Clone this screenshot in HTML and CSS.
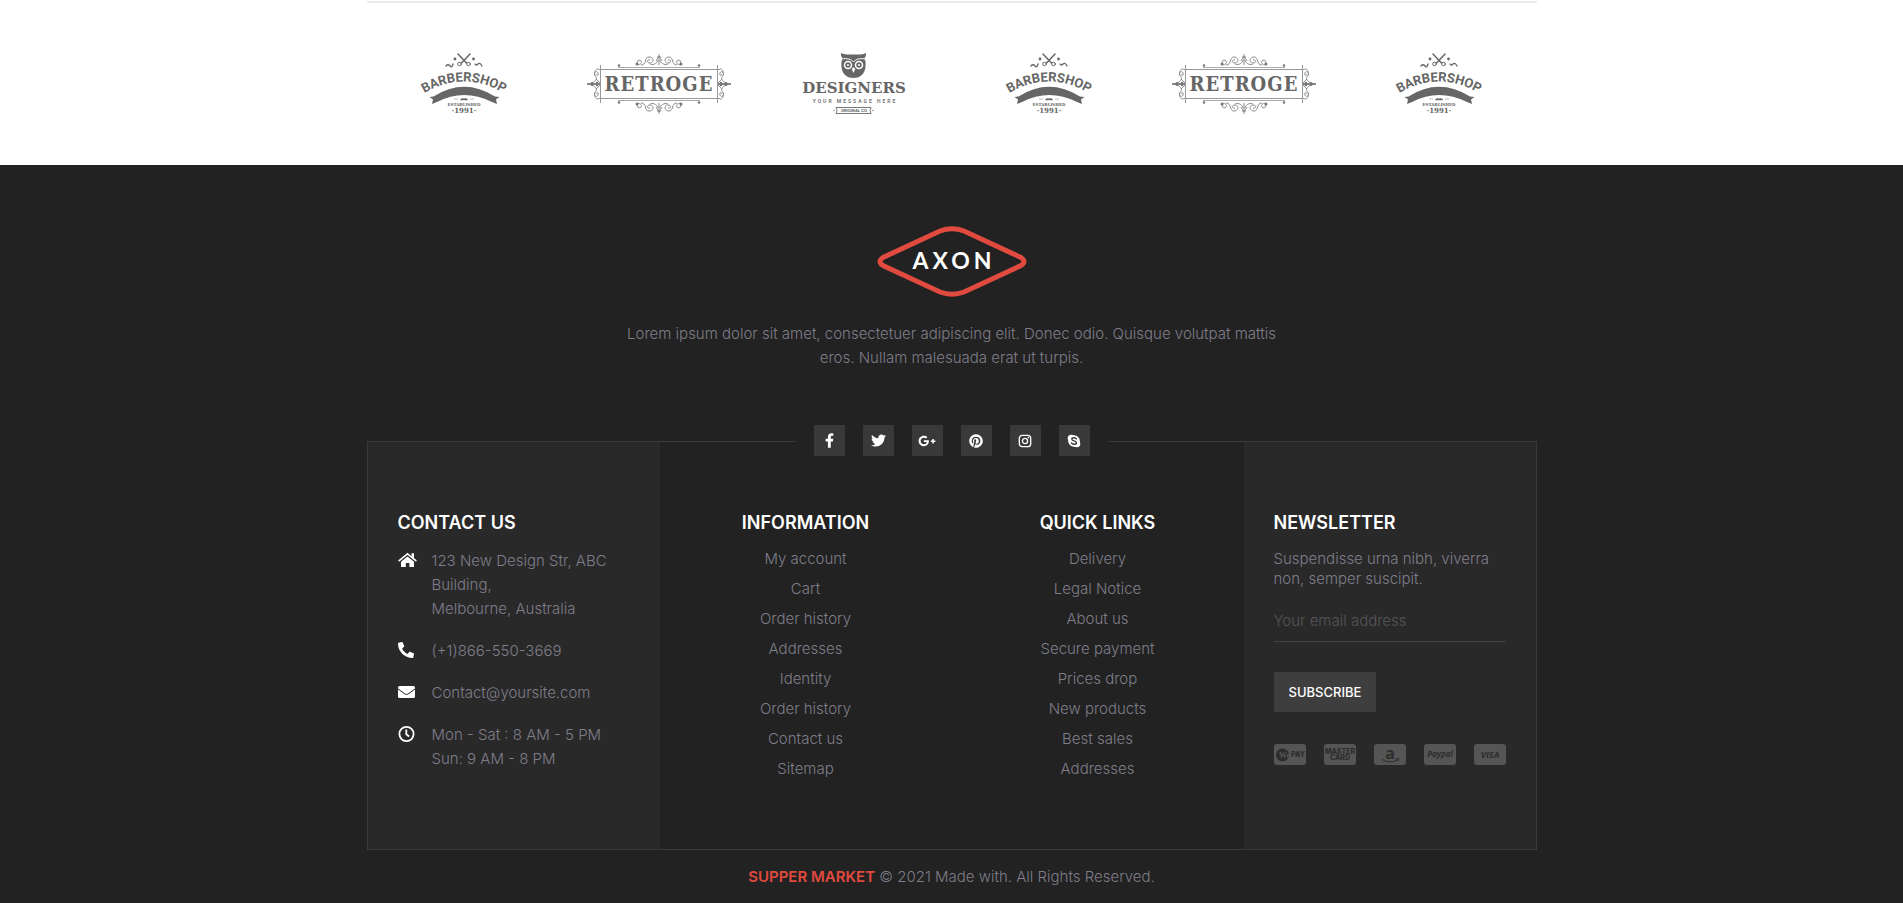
FILE: index.html
```html
<!DOCTYPE html>
<html lang="en">
<head>
<meta charset="utf-8">
<title>Axon</title>
<link rel="stylesheet" href="styles.css">
</head>
<body>
<svg class="symbols" aria-hidden="true">
  <symbol id="barbershop" viewBox="19 10 90 68">
    <g fill="none" stroke="#666" stroke-linecap="round">
      <path stroke-width="1.5" d="M58 14l8.500 9M70 14l-8.500 9"/>
      <circle cx="59.500" cy="24" r="1.8"/><circle cx="68.500" cy="24" r="1.8"/>
      <path stroke-width="1.3" d="M46 26q2-2.500 4 0t3-2M75 24q1 2 3 0t4 2"/>
    </g>
    <circle cx="55" cy="19" r="1.400" fill="#666"/><circle cx="73.500" cy="19" r="1.400" fill="#666"/>
    <path id="barber-arc" fill="none" d="M21 55Q64 28 107 55"/>
    <text class="barber-name"><textPath href="#barber-arc" startOffset="50%" text-anchor="middle">BARBERSHOP</textPath></text>
    <path fill="#666" d="M29.500 57l4-.5Q64 37 95 56.500l4.500.5-3.500 2.500 1 4.500-5-2Q64 48 37 62l-5 2 1-4.500z"/>
    <path stroke="#bbb" d="M54 59h4M70 59h4"/>
    <path fill="#666" d="M60 60q1-2.500 4-1.500 3.500-1 4 1.500-2 .5-4 0-2 .5-4 0z"/>
    <text class="barber-small" x="64" y="65.500">ESTABLISHED</text>
    <text class="barber-year" x="64" y="73">·1991·</text>
  </symbol>
  <symbol id="retroge-corner" viewBox="0 0 73 32">
    <g fill="none" stroke="#8a8a8a">
      <path d="M32 14.500h41" stroke="#aaa"/>
      <path d="M14.500 12v20M12 16.500h61" stroke="#999"/>
      <path d="M73 1v11M71 4h4M70 8q3-5 3-5M50 11c3 2 7-1 5-3s-5 0-3 2M55 12c6 0 3-8 8-8s5 6 1 6-3-4 0-3M64 11c4 2 8-2 8-4"/>
      <path d="M1 30.500h13M6 30c4-2 6-5 3-7M9 23c-2-4 2-6 3-3s-2 3-2 1M10 26c3 3 4 3 4 6M9 20c-1-2 2-5 3-4"/>
    </g>
    <circle cx="33" cy="12.500" r="1.300" fill="#777"/><circle cx="51" cy="11" r="1.500" fill="#777"/>
    <circle cx="6" cy="30.500" r="1.600" fill="#777"/><circle cx="11" cy="30" r="1.300" fill="#777"/>
  </symbol>
  <symbol id="retroge" viewBox="16 10 148 68">
    <g id="retroge-top">
      <use href="#retroge-corner" x="17" y="13" width="73" height="32"/>
      <use href="#retroge-corner" x="17" y="13" width="73" height="32" transform="matrix(-1 0 0 1 180 0)"/>
    </g>
    <use href="#retroge-top" transform="matrix(1 0 0 -1 0 88)"/>
    <text class="retroge-name" x="90" y="51">RETROGE</text>
  </symbol>
  <symbol id="designers" viewBox="15 10 120 68">
    <path fill="#666" d="M62 13c4 2 8 1.500 12.500 1.500S84 15 87 13c0 2 0 3.500-1.500 5C88 25 87 38 74.500 38S61 25 63.500 18C62 16.500 62 15 62 13z"/>
    <path fill="none" stroke="#fff" d="M63 19c5-1 9 0 11.500 3 2.500-3 6.500-4 11.500-3"/>
    <circle cx="69" cy="25" r="3.500" fill="#666" stroke="#fff" stroke-width="1.500"/><circle cx="80" cy="25" r="3.500" fill="#666" stroke="#fff" stroke-width="1.500"/>
    <circle cx="69" cy="25" r="1" fill="#fff"/><circle cx="80" cy="25" r="1" fill="#fff"/>
    <path fill="#fff" d="M74.500 27l1.800 2-1.800 4-1.800-4z"/>
    <text class="designers-name" x="75" y="53">DESIGNERS</text>
    <text class="designers-line" x="76" y="63">YOUR MESSAGE HERE</text>
    <path fill="none" stroke="#777" d="M57 67.500h35l-1 3 1 3H57l1-3z"/>
    <circle cx="55" cy="70.500" r=".7" fill="#777"/><circle cx="94" cy="70.500" r=".7" fill="#777"/>
    <text class="designers-small" x="75" y="72">ORIGINAL CO</text>
  </symbol>
</svg>

<section class="container brands" aria-label="Brands">
  <svg class="brand" width="90" height="68"><use href="#barbershop"/></svg>
  <svg class="brand" width="148" height="68"><use href="#retroge"/></svg>
  <svg class="brand" width="120" height="68"><use href="#designers"/></svg>
  <svg class="brand" width="90" height="68"><use href="#barbershop"/></svg>
  <svg class="brand" width="148" height="68"><use href="#retroge"/></svg>
  <svg class="brand" width="90" height="68"><use href="#barbershop"/></svg>
</section>

<footer class="footer">
  <div class="container">
    <a class="logo" href="#" aria-label="Axon">
      <svg width="150" height="71" viewBox="0 0 150 71">
        <path fill="none" stroke="#e04a3f" stroke-width="5" d="M63 5Q75 .5 87 5L144 31.500Q150 35.500 144 39.500L87 66Q75 70.500 63 66L6 39.500Q0 35.500 6 31.500Z"/>
        <text class="logo-name" x="77" y="43">AXON</text>
      </svg>
    </a>
    <p class="intro">Lorem ipsum dolor sit amet, consectetuer adipiscing elit. Donec odio. Quisque volutpat mattis eros. Nullam malesuada erat ut turpis.</p>

    <nav class="social" aria-label="Social">
      <a href="#" aria-label="Facebook"><svg width="9" height="15" viewBox="0 0 320 512"><path d="M279.140 288l14.220-92.660h-88.910v-60.130c0-25.350 12.420-50.060 52.240-50.060h40.420V6.260S260.430 0 225.360 0c-73.220 0-121.080 44.380-121.080 124.720v70.620H22.890V288h81.390v224h100.170V288z"/></svg></a>
      <a href="#" aria-label="Twitter"><svg width="15" height="15" viewBox="0 0 512 512"><path d="M459.370 151.716c.325 4.548.325 9.097.325 13.645 0 138.720-105.583 298.558-298.558 298.558-59.452 0-114.680-17.219-161.137-47.106 8.447.974 16.568 1.299 25.340 1.299 49.055 0 94.213-16.568 130.274-44.832-46.132-.975-84.792-31.188-98.112-72.772 6.498.974 12.995 1.624 19.818 1.624 9.421 0 18.843-1.300 27.614-3.573-48.081-9.747-84.143-51.980-84.143-102.985v-1.299c13.969 7.797 30.214 12.670 47.431 13.319-28.264-18.843-46.781-51.005-46.781-87.391 0-19.492 5.197-37.360 14.294-52.954 51.655 63.675 129.300 105.258 216.365 109.807-1.624-7.797-2.599-15.918-2.599-24.040 0-57.828 46.782-104.934 104.934-104.934 30.213 0 57.502 12.670 76.670 33.137 23.715-4.548 46.456-13.320 66.599-25.340-7.798 24.366-24.366 44.833-46.132 57.827 21.117-2.273 41.584-8.122 60.426-16.243-14.292 20.791-32.161 39.308-52.628 54.253z"/></svg></a>
      <a href="#" aria-label="Google Plus"><svg width="18" height="14" viewBox="0 0 640 512"><path d="M386.061 228.496c1.834 9.692 3.143 19.384 3.143 31.956C389.204 370.205 315.599 448 204.800 448c-106.084 0-192-85.915-192-192s85.916-192 192-192c51.864 0 95.083 18.859 128.611 50.292l-52.126 50.030c-14.145-13.621-39.028-29.599-76.485-29.599-65.484 0-118.920 54.221-118.920 121.277 0 67.056 53.436 121.277 118.920 121.277 75.961 0 104.513-54.745 108.965-82.773H204.800v-66.009h181.261zm185.406 6.437V179.200h-56.001v55.733h-55.733v56.001h55.733v55.733h56.001v-55.733H627.200v-56.001h-55.733z"/></svg></a>
      <a href="#" aria-label="Pinterest"><svg width="14" height="14" viewBox="0 0 496 512"><path d="M496 256c0 137-111 248-248 248-25.600 0-50.200-3.900-73.400-11.100 10.100-16.500 25.200-43.500 30.800-65 3-11.600 15.400-59 15.400-59 8.100 15.400 31.700 28.500 56.800 28.500 74.800 0 128.700-68.800 128.700-154.300 0-81.900-66.900-143.200-152.900-143.200-107 0-163.900 71.800-163.900 150.100 0 36.400 19.400 81.700 50.300 96.100 4.700 2.200 7.200 1.200 8.300-3.300.8-3.400 5-20.300 6.900-28.100.6-2.500.3-4.700-1.700-7.100-10.100-12.500-18.300-35.300-18.300-56.600 0-54.700 41.400-107.600 112-107.600 60.900 0 103.600 41.500 103.600 100.900 0 67.100-33.900 113.600-78 113.600-24.300 0-42.600-20.100-36.700-44.800 7-29.500 20.500-61.300 20.500-82.600 0-19-10.200-34.900-31.400-34.900-24.900 0-44.900 25.700-44.900 60.200 0 22 7.400 36.800 7.400 36.800s-24.500 103.800-29 123.200c-5 21.400-3 51.600-.9 71.200C65.400 450.900 0 361.100 0 256 0 119 111 8 248 8s248 111 248 248z"/></svg></a>
      <a href="#" aria-label="Instagram"><svg width="14" height="14" viewBox="0 0 14 14"><rect x="1.300" y="1.300" width="11.400" height="11.400" rx="3" fill="none" stroke="#fff" stroke-width="1.300"/><circle cx="7" cy="7" r="2.600" fill="none" stroke="#fff" stroke-width="1.300"/><circle cx="10.400" cy="3.600" r=".8"/></svg></a>
      <a href="#" aria-label="Skype"><svg width="14" height="14" viewBox="0 0 14 14"><circle cx="7" cy="7" r="5.800"/><circle cx="4.300" cy="4.300" r="3.600"/><circle cx="9.700" cy="9.700" r="3.600"/><path fill="none" stroke="#393939" stroke-width="1.400" stroke-linecap="round" d="M9.400 4.900C8.800 3.500 4.800 3.300 4.800 5.200S9.500 6.700 9.500 8.700 5.200 10.700 4.500 9"/></svg></a>
    </nav>

    <div class="panel">
      <section class="column column-shaded">
        <h2>Contact us</h2>
        <ul class="contact">
          <li><svg width="19" height="16" viewBox="0 0 19 16"><path d="M9.500 4.500l6.500 5.300V15h-4.600v-4H7.800v4H3V9.800z"/><path fill="none" stroke="#fff" stroke-width="1.700" stroke-linecap="round" d="M1.200 8.600L9.500 1.900l8.300 6.700"/><path d="M13.500 1.300H16v5l-2.500-2z"/></svg><span>123 New Design Str, ABC Building,<br>Melbourne, Australia</span></li>
          <li><svg width="16" height="16" viewBox="0 0 512 512"><path transform="matrix(-1 0 0 1 512 0)" d="M493.400 24.600l-104-24c-11.300-2.600-22.900 3.300-27.500 13.900l-48 112c-4.200 9.800-1.400 21.300 6.900 28l60.600 49.600c-36 76.700-98.900 140.500-177.200 177.200l-49.600-60.600c-6.800-8.300-18.200-11.100-28-6.900l-112 48C3.900 366.500-2 378.100.6 389.400l24 104C27.100 504.200 36.700 512 48 512c256.100 0 464-207.500 464-464 0-11.200-7.700-20.900-18.600-23.400z"/></svg><span>(+1)866-550-3669</span></li>
          <li><svg width="17" height="16" viewBox="0 0 17 16"><rect y="2" width="17" height="12" rx="1.500"/><path fill="none" stroke="#292929" d="M0 5l7 5q1.500 1 3 0l7-5"/></svg><span>Contact@yoursite.com</span></li>
          <li><svg width="17" height="16" viewBox="0 0 17 16"><circle cx="8.500" cy="8" r="7.100" fill="none" stroke="#fff" stroke-width="1.800"/><path fill="none" stroke="#fff" stroke-width="1.800" d="M8.300 3.500v4.800l2.800 2.200"/></svg><span>Mon - Sat : 8 AM - 5 PM<br>Sun: 9 AM - 8 PM</span></li>
        </ul>
      </section>

      <section class="column column-center">
        <h2>Information</h2>
        <ul class="links">
          <li><a href="#">My account</a></li>
          <li><a href="#">Cart</a></li>
          <li><a href="#">Order history</a></li>
          <li><a href="#">Addresses</a></li>
          <li><a href="#">Identity</a></li>
          <li><a href="#">Order history</a></li>
          <li><a href="#">Contact us</a></li>
          <li><a href="#">Sitemap</a></li>
        </ul>
      </section>

      <section class="column column-center">
        <h2>Quick links</h2>
        <ul class="links">
          <li><a href="#">Delivery</a></li>
          <li><a href="#">Legal Notice</a></li>
          <li><a href="#">About us</a></li>
          <li><a href="#">Secure payment</a></li>
          <li><a href="#">Prices drop</a></li>
          <li><a href="#">New products</a></li>
          <li><a href="#">Best sales</a></li>
          <li><a href="#">Addresses</a></li>
        </ul>
      </section>

      <section class="column column-shaded">
        <h2>Newsletter</h2>
        <form class="newsletter">
          <p>Suspendisse urna nibh, viverra non, semper suscipit.</p>
          <input type="email" placeholder="Your email address" aria-label="Your email address">
          <button type="button">SUBSCRIBE</button>
        </form>
        <div class="cards">
          <svg width="32" height="21"><rect width="32" height="21" rx="3"/><circle class="card-ink" cx="8.500" cy="11" r="6.500"/><text class="card-cut" x="5" y="14">We</text><text class="card-tiny" x="17" y="13">PAY</text></svg>
          <svg width="32" height="21"><rect width="32" height="21" rx="3"/><text class="card-tiny card-mid" x="16" y="10">MASTER</text><text class="card-tiny card-mid" x="16" y="16">CARD</text></svg>
          <svg width="32" height="21"><rect width="32" height="21" rx="3"/><text class="card-large card-mid" x="16" y="15">a</text><path class="card-smile" d="M8 15.500q8 4.500 15 .5M21.500 15l3-.5-.5 2.500"/></svg>
          <svg width="32" height="21"><rect width="32" height="21" rx="3"/><text class="card-italic card-mid" x="16" y="13">Paypal</text></svg>
          <svg width="32" height="21"><rect width="32" height="21" rx="3"/><text class="card-italic card-visa card-mid" x="16" y="14">VISA</text></svg>
        </div>
      </section>
    </div>

    <p class="copyright"><a href="#">SUPPER MARKET</a> © 2021 Made with. All Rights Reserved.</p>
  </div>
</footer>
</body>
</html>
```
FILE: styles.css
```css
* { box-sizing: border-box; }

body {
  margin: 0;
  padding-top: 1px;
  background: #fff;
  color: #7f7d89;
  font: 300 15px/24px Inter, "Liberation Sans", sans-serif;
}

h2, p, ul { margin: 0; padding: 0; }
ul { list-style: none; }
a { color: inherit; text-decoration: none; }
svg { display: block; }

.symbols { position: absolute; width: 0; height: 0; }

.container { max-width: 1170px; margin: 0 auto; }

.brands {
  display: grid;
  grid-template-columns: repeat(6, 1fr);
  justify-items: center;
  padding: 47px 0;
  border-top: 2px solid #ebebeb;
}

.barber-name { font: 700 13px Roboto, sans-serif; fill: #666; }
.barber-small { font: 700 4px "DejaVu Serif", serif; fill: #666; text-anchor: middle; }
.barber-year { font: 700 7px "DejaVu Serif", serif; fill: #666; text-anchor: middle; }
.retroge-name { font: 700 20px "DejaVu Serif Condensed", "DejaVu Serif", serif; letter-spacing: 1px; fill: #666; text-anchor: middle; }
.designers-name { font: 700 15px "DejaVu Serif", serif; fill: #666; text-anchor: middle; }
.designers-line { font: 700 5px Roboto, sans-serif; letter-spacing: 2px; fill: #777; text-anchor: middle; }
.designers-small { font: 700 4px Inter, sans-serif; fill: #666; text-anchor: middle; }

.footer { padding: 61px 0 14px; background: #222; }

.logo { display: block; width: fit-content; margin: 0 auto; }
.logo-name { font: 700 23px Lato, Inter, sans-serif; letter-spacing: 4px; fill: #fff; text-anchor: middle; }

.intro { max-width: 680px; margin: 25px auto 55px; text-align: center; }

.social {
  position: relative;
  display: flex;
  gap: 18px;
  width: fit-content;
  margin: 0 auto -15px;
  padding: 0 18px;
  background: #222;
}
.social a {
  display: flex;
  align-items: center;
  justify-content: center;
  width: 31px;
  height: 31px;
  background: #393939;
  fill: #fff;
}

.panel {
  display: grid;
  grid-template-columns: repeat(4, 1fr);
  border: 1px solid #393939;
}
.column { padding: 69px 30px 68px; }
.column-shaded { background: #292929; }
.column-center { text-align: center; }

h2 {
  margin-bottom: 12px;
  color: #fff;
  font: 600 18px/24px Inter, "Liberation Sans", sans-serif;
  text-transform: uppercase;
}

.contact, .links { display: grid; }
.contact { gap: 18px; padding-top: 2px; }
.contact li { display: grid; grid-template-columns: 34px 1fr; }
.contact svg { margin-top: 3px; fill: #fff; }
.links { gap: 6px; }

.newsletter { display: grid; justify-items: start; padding-top: 2px; }
.newsletter p { line-height: 20px; }
.newsletter input {
  width: 100%;
  height: 43px;
  margin: 10px 0 30px;
  padding: 0;
  border: 0;
  border-bottom: 1px solid #444;
  background: none;
  color: #7f7d89;
  font: inherit;
}
.newsletter input::placeholder { color: #56555a; opacity: 1; }
.newsletter button {
  height: 40px;
  padding: 0 15px;
  border: 0;
  background: #3e3e3e;
  color: #fff;
  font: 500 13px Inter, "Liberation Sans", sans-serif;
}

.cards { display: flex; justify-content: space-between; margin-top: 32px; fill: #555; }
.cards text { fill: #2d2d2d; }
.card-ink { fill: #2d2d2d; }
.cards .card-cut { font: 700 8px "Liberation Serif", serif; fill: #555; }
.card-tiny { font: 800 7px Inter, sans-serif; }
.card-large { font: 700 16px "Open Sans", sans-serif; }
.card-italic { font: italic 700 8px "Open Sans", sans-serif; }
.card-visa { font-size: 9px; }
.card-mid { text-anchor: middle; }
.card-smile { fill: none; stroke: #2d2d2d; }

.copyright { margin-top: 15px; text-align: center; }
.copyright a { color: #e04a3f; font-weight: 600; }
```
